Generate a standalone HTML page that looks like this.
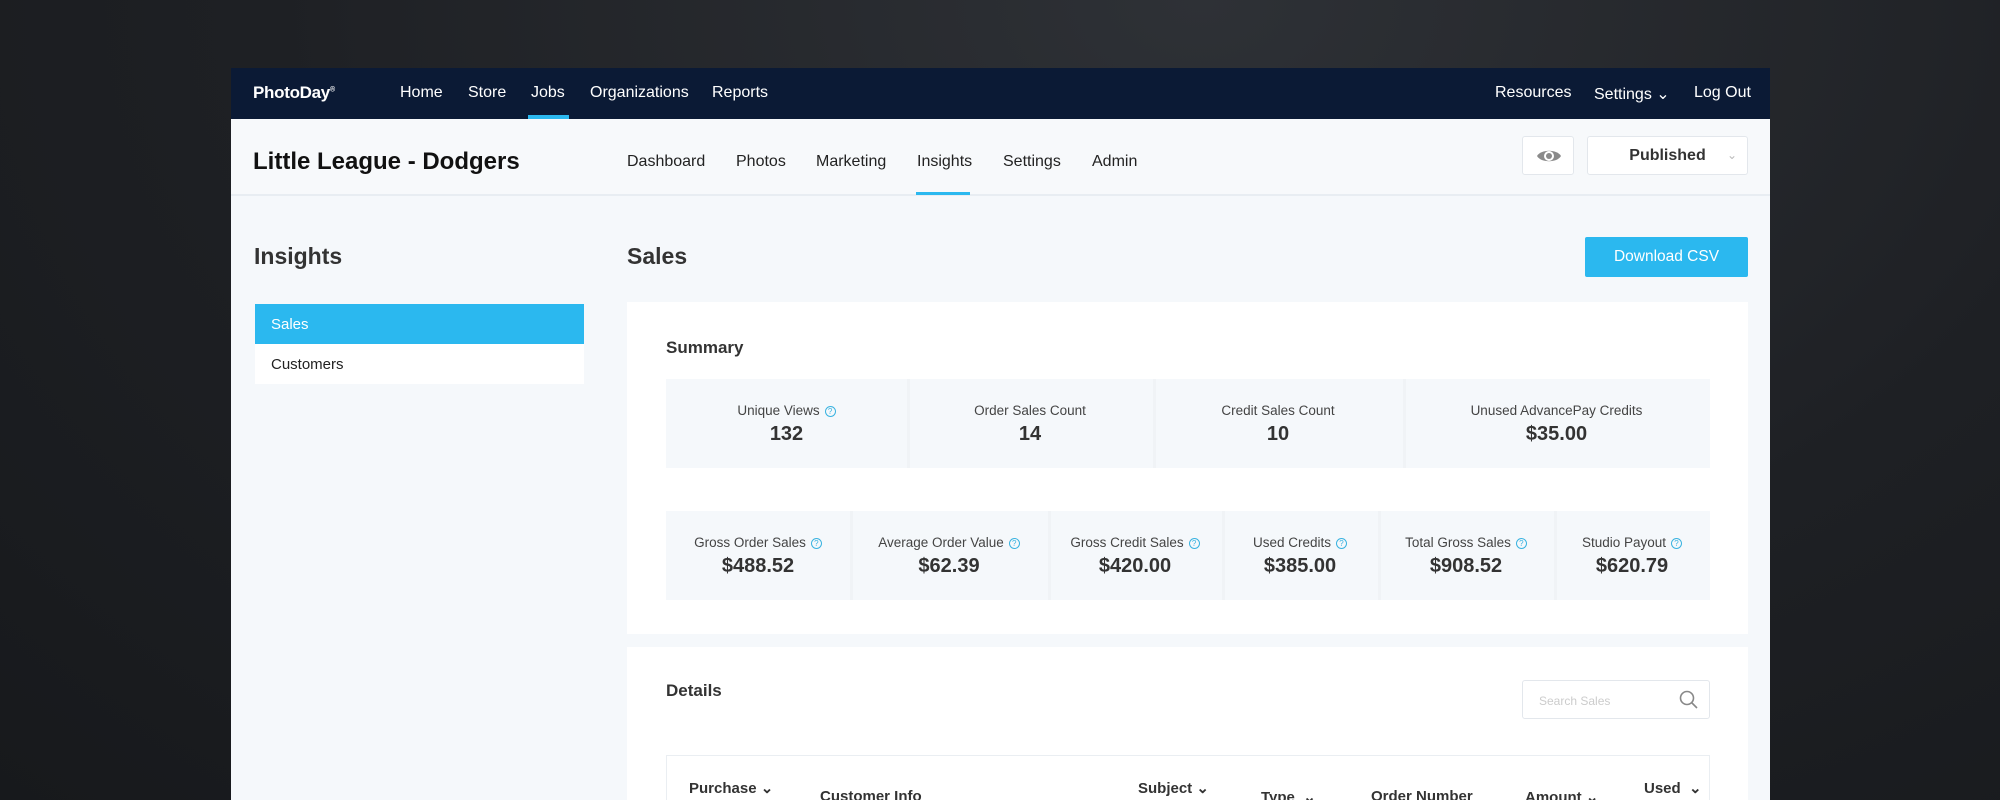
<!DOCTYPE html>
<html><head><meta charset="utf-8"><style>
*{box-sizing:border-box;margin:0;padding:0}
html,body{width:2000px;height:800px;overflow:hidden}
body{font-family:"Liberation Sans",sans-serif;background:radial-gradient(ellipse at 60% 0%,#2e3136 0%,#1e2024 55%,#17191c 100%);position:relative}
.abs{position:absolute}
.win{left:231px;top:68px;width:1539px;height:732px;background:#f5f8fb;overflow:hidden}
.nav{left:0;top:0;width:1539px;height:51px;background:#0b1a35;color:#fff;font-size:16px}
.nav span{position:absolute;top:16px}
.sub{left:0;top:51px;width:1539px;height:77px;background:#f7f9fb;border-bottom:2px solid #e8edf2}
.tab{position:absolute;top:34px;font-size:16px;color:#222}
.card{background:#fff;overflow:hidden}
.lbl{position:absolute;font-size:13.5px;color:#444;text-align:center}
.val{position:absolute;font-size:20px;font-weight:bold;color:#333;text-align:center}
.q{display:inline-block;width:11px;height:11px;border:1px solid #3ab3e0;border-radius:50%;font-size:8px;line-height:9px;color:#3ab3e0;text-align:center;margin-left:5px;vertical-align:1px}
.th{position:absolute;font-size:15px;font-weight:bold;color:#333}
</style></head><body>
<div class="abs win">
 <div class="abs nav">
  <span style="left:22px;top:15px;font-weight:bold;font-size:17px;letter-spacing:-0.3px">PhotoDay<sup style="font-size:7px">®</sup></span>
  <span style="left:169px">Home</span>
  <span style="left:237px">Store</span>
  <span style="left:300px">Jobs</span>
  <span style="left:359px">Organizations</span>
  <span style="left:481px">Reports</span>
  <div class="abs" style="left:297px;top:47px;width:41px;height:4px;background:#2bb8ef"></div>
  <span style="left:1264px">Resources</span>
  <span style="left:1363px">Settings &#8964;</span>
  <span style="left:1463px">Log Out</span>
 </div>
 <div class="abs sub">
  <div class="abs" style="left:22px;top:29px;font-size:24px;font-weight:bold;color:#111">Little League - Dodgers</div>
  <span class="tab" style="left:396px">Dashboard</span>
  <span class="tab" style="left:505px">Photos</span>
  <span class="tab" style="left:585px">Marketing</span>
  <span class="tab" style="left:686px">Insights</span>
  <span class="tab" style="left:772px">Settings</span>
  <span class="tab" style="left:861px">Admin</span>
  <div class="abs" style="left:685px;top:73px;width:54px;height:3px;background:#2bb8ef"></div>
  <div class="abs" style="left:1291px;top:17px;width:52px;height:39px;background:#fff;border:1px solid #e3e7ec;border-radius:3px">
   <svg width="26" height="18" viewBox="0 0 26 18" style="position:absolute;left:13px;top:10px"><path d="M1 9C5 2 21 2 25 9C21 16 5 16 1 9Z" fill="#8a8a8a"/><circle cx="13" cy="9" r="5" fill="#fff"/><circle cx="13" cy="9" r="3" fill="#8a8a8a"/></svg>
  </div>
  <div class="abs" style="left:1356px;top:17px;width:161px;height:39px;background:#fff;border:1px solid #e3e7ec;border-radius:3px;font-weight:bold;font-size:16px;color:#333;text-align:center;line-height:37px">Published<span style="position:absolute;right:10px;color:#bbb;font-weight:normal;font-size:12px">&#8964;</span></div>
 </div>
 <div class="abs" style="left:23px;top:175px;font-size:23px;font-weight:bold;color:#333">Insights</div>
 <div class="abs" style="left:24px;top:236px;width:329px;height:40px;background:#2bb8ef;color:#fff;font-size:15px;padding:12px 16px">Sales</div>
 <div class="abs" style="left:24px;top:276px;width:329px;height:40px;background:#fff;color:#222;font-size:15px;padding:12px 16px">Customers</div>
 <div class="abs" style="left:396px;top:175px;font-size:23px;font-weight:bold;color:#333">Sales</div>
 <div class="abs" style="left:1354px;top:169px;width:163px;height:40px;background:#2bb8ef;border-radius:2px;color:#fff;font-size:15.5px;text-align:center;line-height:40px">Download CSV</div>

 <div class="abs card" style="left:396px;top:234px;width:1121px;height:332px">
  <div class="abs" style="left:39px;top:36px;font-size:17px;font-weight:bold;color:#333">Summary</div>
  <div class="abs" style="left:39px;top:77px;width:1044px;height:89px;background:#f5f8fb">
   <div class="abs" style="left:241px;top:0;width:3px;height:89px;background:#f0f3f6"></div>
   <div class="abs" style="left:487px;top:0;width:3px;height:89px;background:#f0f3f6"></div>
   <div class="abs" style="left:737px;top:0;width:3px;height:89px;background:#f0f3f6"></div>
   <div class="lbl" style="left:0;width:241px;top:24px">Unique Views<span class="q">?</span></div>
   <div class="val" style="left:0;width:241px;top:44px">132</div>
   <div class="lbl" style="left:241px;width:246px;top:24px">Order Sales Count</div>
   <div class="val" style="left:241px;width:246px;top:44px">14</div>
   <div class="lbl" style="left:487px;width:250px;top:24px">Credit Sales Count</div>
   <div class="val" style="left:487px;width:250px;top:44px">10</div>
   <div class="lbl" style="left:737px;width:307px;top:24px">Unused AdvancePay Credits</div>
   <div class="val" style="left:737px;width:307px;top:44px">$35.00</div>
  </div>
  <div class="abs" style="left:39px;top:209px;width:1044px;height:89px;background:#f5f8fb">
   <div class="abs" style="left:184px;top:0;width:3px;height:89px;background:#f0f3f6"></div>
   <div class="abs" style="left:382px;top:0;width:3px;height:89px;background:#f0f3f6"></div>
   <div class="abs" style="left:556px;top:0;width:3px;height:89px;background:#f0f3f6"></div>
   <div class="abs" style="left:712px;top:0;width:3px;height:89px;background:#f0f3f6"></div>
   <div class="abs" style="left:888px;top:0;width:3px;height:89px;background:#f0f3f6"></div>
   <div class="lbl" style="left:0;width:184px;top:24px">Gross Order Sales<span class="q">?</span></div>
   <div class="val" style="left:0;width:184px;top:44px">$488.52</div>
   <div class="lbl" style="left:184px;width:198px;top:24px">Average Order Value<span class="q">?</span></div>
   <div class="val" style="left:184px;width:198px;top:44px">$62.39</div>
   <div class="lbl" style="left:382px;width:174px;top:24px">Gross Credit Sales<span class="q">?</span></div>
   <div class="val" style="left:382px;width:174px;top:44px">$420.00</div>
   <div class="lbl" style="left:556px;width:156px;top:24px">Used Credits<span class="q">?</span></div>
   <div class="val" style="left:556px;width:156px;top:44px">$385.00</div>
   <div class="lbl" style="left:712px;width:176px;top:24px">Total Gross Sales<span class="q">?</span></div>
   <div class="val" style="left:712px;width:176px;top:44px">$908.52</div>
   <div class="lbl" style="left:888px;width:156px;top:24px">Studio Payout<span class="q">?</span></div>
   <div class="val" style="left:888px;width:156px;top:44px">$620.79</div>
  </div>
 </div>

 <div class="abs card" style="left:396px;top:579px;width:1121px;height:153px">
  <div class="abs" style="left:39px;top:34px;font-size:17px;font-weight:bold;color:#333">Details</div>
  <div class="abs" style="left:895px;top:33px;width:188px;height:39px;border:1px solid #e3e7ec;border-radius:3px;font-size:12px;color:#ccc;padding:13px 16px">Search Sales
   <svg width="20" height="20" viewBox="0 0 20 20" style="position:absolute;right:10px;top:9px"><circle cx="8" cy="8" r="6.5" fill="none" stroke="#888" stroke-width="1.6"/><path d="M13 13L18 18" stroke="#888" stroke-width="1.6"/></svg>
  </div>
  <div class="abs" style="left:39px;top:108px;width:1044px;height:100px;border:1px solid #eaeef2">
   <span class="th" style="left:22px;top:23px">Purchase &#8964;</span>
   <span class="th" style="left:153px;top:32px">Customer Info</span>
   <span class="th" style="left:471px;top:23px">Subject &#8964;</span>
   <span class="th" style="left:594px;top:32px">Type &nbsp;&#8964;</span>
   <span class="th" style="left:704px;top:32px">Order Number</span>
   <span class="th" style="left:858px;top:32px">Amount &#8964;</span>
   <span class="th" style="left:977px;top:23px">Used &nbsp;&#8964;</span>
  </div>
 </div>
</div>
</body></html>
